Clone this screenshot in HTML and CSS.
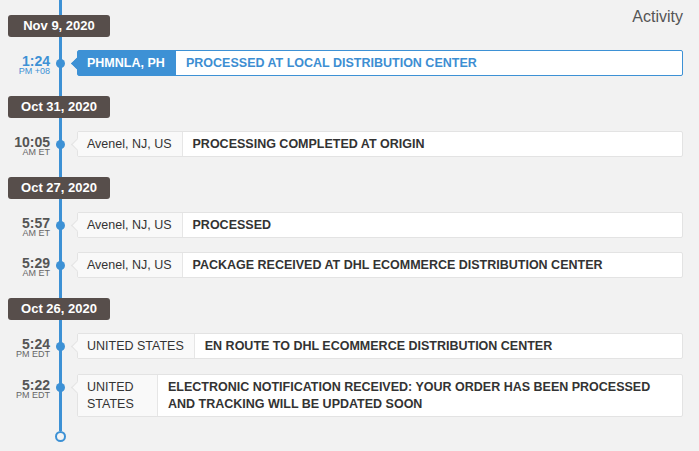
FILE: index.html
```html
<!DOCTYPE html>
<html>
<head>
<meta charset="utf-8">
<link rel="stylesheet" href="styles.css">
</head>
<body>
<div class="page">
  <h2 class="title">Activity</h2>
  <div class="timeline">
    <div class="group">
      <div class="badge">Nov 9, 2020</div>
      <div class="row active">
        <div class="time"><b>1:24</b><span>PM +08</span></div>
        <div class="dot"></div>
        <div class="card"><div class="loc">PHMNLA, PH</div><div class="msg">PROCESSED AT LOCAL DISTRIBUTION CENTER</div></div>
      </div>
    </div>
    <div class="group">
      <div class="badge">Oct 31, 2020</div>
      <div class="row">
        <div class="time"><b>10:05</b><span>AM ET</span></div>
        <div class="dot"></div>
        <div class="card"><div class="loc">Avenel, NJ, US</div><div class="msg">PROCESSING COMPLETED AT ORIGIN</div></div>
      </div>
    </div>
    <div class="group">
      <div class="badge">Oct 27, 2020</div>
      <div class="row">
        <div class="time"><b>5:57</b><span>AM ET</span></div>
        <div class="dot"></div>
        <div class="card"><div class="loc">Avenel, NJ, US</div><div class="msg">PROCESSED</div></div>
      </div>
      <div class="row">
        <div class="time"><b>5:29</b><span>AM ET</span></div>
        <div class="dot"></div>
        <div class="card"><div class="loc">Avenel, NJ, US</div><div class="msg">PACKAGE RECEIVED AT DHL ECOMMERCE DISTRIBUTION CENTER</div></div>
      </div>
    </div>
    <div class="group last">
      <div class="badge">Oct 26, 2020</div>
      <div class="row">
        <div class="time"><b>5:24</b><span>PM EDT</span></div>
        <div class="dot"></div>
        <div class="card"><div class="loc">UNITED STATES</div><div class="msg">EN ROUTE TO DHL ECOMMERCE DISTRIBUTION CENTER</div></div>
      </div>
      <div class="row tall">
        <div class="time"><b>5:22</b><span>PM EDT</span></div>
        <div class="dot"></div>
        <div class="card"><div class="loc loc-narrow">UNITED STATES</div><div class="msg">ELECTRONIC NOTIFICATION RECEIVED: YOUR ORDER HAS BEEN PROCESSED<br>AND TRACKING WILL BE UPDATED SOON</div></div>
      </div>
    </div>
    <div class="end"></div>
  </div>
</div>
</body>
</html>
```
FILE: styles.css
```css
* { box-sizing: border-box; }
html, body { margin: 0; padding: 0; }
body {
  background: #f2f2f2;
  font-family: "Liberation Sans", Arial, sans-serif;
  color: #333;
  width: 699px;
  height: 451px;
  overflow: hidden;
}
.page {
  display: grid;
  grid-template-areas: "main";
  padding: 0 16px 0 8px;
}
.title {
  grid-area: main;
  justify-self: end;
  align-self: start;
  margin: 7px 0 0 0;
  font-size: 16px;
  font-weight: normal;
  color: #555;
  line-height: 20px;
}
.timeline {
  grid-area: main;
  position: relative;
  padding-top: 15px;
}
.timeline::before {
  content: "";
  position: absolute;
  left: 51px;
  top: 0;
  bottom: 11px;
  width: 3px;
  background: #3d91d5;
}
.group { padding-bottom: 6px; }
.group.last { padding-bottom: 0; }
.badge {
  position: relative;
  width: 102px;
  height: 22px;
  line-height: 22px;
  background: #574e4b;
  color: #fff;
  font-weight: bold;
  font-size: 13px;
  text-align: center;
  border-radius: 3px;
  margin-bottom: 13px;
}
.row {
  display: flex;
  align-items: flex-start;
  margin-bottom: 14px;
}
.row.tall { margin-top: 15px; }
.time {
  width: 42px;
  text-align: right;
  color: #555;
  padding-top: 5px;
  display: flex;
  flex-direction: column;
  align-items: flex-end;
}
.time b {
  font-size: 14px;
  line-height: 12px;
  font-weight: bold;
}
.time span {
  font-size: 9px;
  line-height: 9px;
  color: #666;
}
.dot {
  position: relative;
  width: 9px;
  height: 9px;
  border-radius: 50%;
  background: #3d91d5;
  margin: 9px 0 0 6px;
  flex: none;
}
.card {
  position: relative;
  flex: 1;
  display: flex;
  margin-left: 12px;
  background: #fff;
  border: 1px solid #e3e3e3;
  border-radius: 2px;
}
.card::before {
  content: "";
  position: absolute;
  left: -5px;
  top: 8px;
  width: 8px;
  height: 8px;
  background: #f9f9f9;
  border-left: 1px solid #e3e3e3;
  border-bottom: 1px solid #e3e3e3;
  transform: rotate(45deg);
}
.loc {
  position: relative;
  flex: none;
  background: #f9f9f9;
  border-right: 1px solid #e6e6e6;
  padding: 3.5px 10px 3.5px 9px;
  font-size: 12.5px;
  line-height: 17px;
  color: #333;
}
.loc-narrow { width: 80px; }
.msg {
  padding: 3.5px 10px;
  font-size: 12.5px;
  line-height: 17px;
  font-weight: bold;
  color: #333;
}
.active .time, .active .time span { color: #3d91d5; }
.active .card { border-color: #3d91d5; }
.active .card::before { background: #3d91d5; border-color: #3d91d5; }
.active .loc {
  background: #3d91d5;
  color: #fff;
  font-weight: bold;
  font-size: 12.5px;
  border-right: none;
  width: 98px;
}
.active .msg { color: #3d8ed2; font-size: 12.5px; }
.end {
  width: 11px;
  height: 11px;
  border-radius: 50%;
  border: 2px solid #3d91d5;
  background: #f4f4f4;
  margin: 2px 0 0 47px;
  position: relative;
}
```
